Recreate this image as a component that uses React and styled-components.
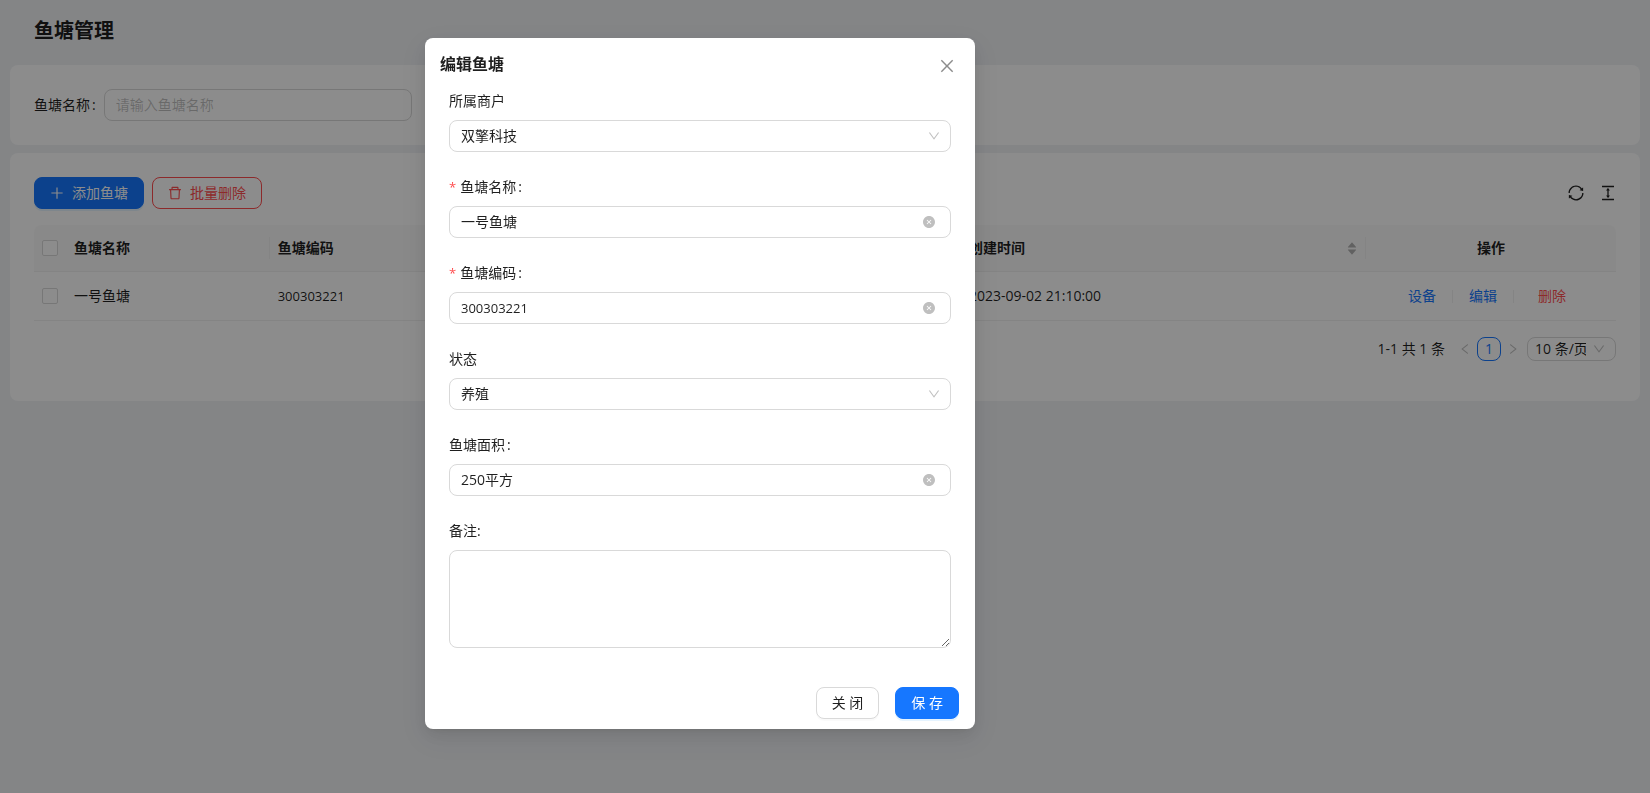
import React, { useState } from 'react';
import styled, { createGlobalStyle } from 'styled-components';
import {
  AiFillCaretDown,
  AiFillCaretUp,
  AiFillCloseCircle,
  AiOutlineClose,
  AiOutlineColumnHeight,
  AiOutlineDelete,
  AiOutlineDown,
  AiOutlineLeft,
  AiOutlinePlus,
  AiOutlineRight,
  AiOutlineSync,
} from 'react-icons/ai';

const GlobalStyle = createGlobalStyle`
  *, *::before, *::after {
    box-sizing: border-box;
  }

  body {
    margin: 0;
    background-color: #f0f2f5;
    color: rgba(0, 0, 0, 0.88);
    font-family: 'Open Sans', 'Noto Sans CJK SC', sans-serif;
    font-size: 14px;
    line-height: 22px;
  }

  button, input, select, textarea {
    font: inherit;
    color: inherit;
  }

  svg {
    display: block;
    flex: none;
  }
`;

const Page = styled.main`
  padding: 0 10px;
`;

const PageTitle = styled.h1`
  margin: 0;
  padding: 17px 24px 20px;
  font-size: 20px;
  font-weight: 600;
  line-height: 28px;
`;

const Card = styled.section`
  margin-bottom: 8px;
  padding: 24px;
  background-color: #fff;
  border-radius: 8px;
`;

const SearchForm = styled.form`
  display: grid;
  grid-template-columns: repeat(4, 1fr);
  gap: 24px;
`;

const SearchItem = styled.div`
  display: flex;
  align-items: center;
  gap: 8px;
`;

const Label = styled.label`
  display: flex;
  align-items: center;
  flex: none;

  &::before {
    content: '*';
    display: ${({ $required }) => ($required ? 'block' : 'none')};
    margin-right: 4px;
    color: #ff4d4f;
    font-size: 13px;
  }

  &::after {
    content: ':';
    display: ${({ $colon }) => ($colon ? 'block' : 'none')};
    margin-left: 2px;
  }
`;

const InputBox = styled.div`
  display: flex;
  align-items: center;
  flex: 1;
  min-width: 0;
  height: 32px;
  padding: 0 11px;
  background-color: #fff;
  border: 1px solid #d9d9d9;
  border-radius: 8px;
`;

const TextInput = styled.input`
  flex: 1;
  min-width: 0;
  padding: 0;
  border: 0;
  outline: 0;
  background: none;

  &::placeholder {
    color: rgba(0, 0, 0, 0.25);
  }
`;

const NumberInput = styled(TextInput)`
  font-size: 13px;
`;

const ClearButton = styled.button`
  margin: 0 4px;
  padding: 0;
  border: 0;
  background: none;
  color: rgba(0, 0, 0, 0.25);
  font-size: 12px;
  cursor: pointer;
`;

const SelectBox = styled.div`
  display: grid;
  align-items: center;

  select, svg {
    grid-area: 1 / 1;
  }

  svg {
    justify-self: end;
    margin-right: 11px;
    color: rgba(0, 0, 0, 0.25);
    font-size: 12px;
    pointer-events: none;
  }
`;

const Select = styled.select`
  width: 100%;
  height: ${({ $small }) => ($small ? '24px' : '32px')};
  padding: ${({ $small }) => ($small ? '0 29px 0 7px' : '0 29px 0 11px')};
  appearance: none;
  background-color: #fff;
  border: 1px solid #d9d9d9;
  border-radius: 8px;
  line-height: 22px;
`;

const Textarea = styled.textarea`
  display: block;
  width: 100%;
  height: 98px;
  padding: 4px 11px;
  border: 1px solid #d9d9d9;
  border-radius: 8px;
  resize: vertical;
`;

const Toolbar = styled.div`
  display: flex;
  align-items: center;
  justify-content: space-between;
  margin-bottom: 16px;
`;

const ButtonGroup = styled.div`
  display: flex;
  gap: 8px;
`;

const Button = styled.button`
  display: flex;
  align-items: center;
  gap: 8px;
  height: 32px;
  padding: 0 15px;
  background-color: #fff;
  border: 1px solid #d9d9d9;
  border-radius: 8px;
  box-shadow: 0 2px 0 rgba(0, 0, 0, 0.02);
  cursor: pointer;
`;

const PrimaryButton = styled(Button)`
  background-color: #1677ff;
  border-color: #1677ff;
  box-shadow: 0 2px 0 rgba(5, 145, 255, 0.1);
  color: #fff;
`;

const DangerButton = styled(Button)`
  border-color: #ff4d4f;
  box-shadow: none;
  color: #ff4d4f;
`;

const ToolIcons = styled.div`
  display: flex;
  gap: 16px;
`;

const IconButton = styled.button`
  padding: 0;
  border: 0;
  background: none;
  font-size: 16px;
  cursor: pointer;
`;

const Table = styled.table`
  width: 100%;
  border-collapse: separate;
  border-spacing: 0;
  table-layout: fixed;
`;

const Col = styled.col`
  width: ${({ $width }) => $width};
`;

const Th = styled.th`
  position: relative;
  height: 47px;
  padding: 12px 8px;
  background-color: #fafafa;
  border-bottom: 1px solid #f0f0f0;
  font-weight: 600;
  text-align: ${({ $align }) => $align || 'left'};

  &:first-child {
    border-top-left-radius: 8px;
  }

  &:last-child {
    border-top-right-radius: 8px;
  }

  &:not(:first-child):not(:last-child)::after {
    content: '';
    position: absolute;
    top: 12px;
    right: 0;
    width: 1px;
    height: 22px;
    background-color: #f0f0f0;
  }
`;

const Td = styled.td`
  height: 49px;
  padding: 12px 8px;
  border-bottom: 1px solid #f0f0f0;
`;

const NumberTd = styled(Td)`
  font-size: 13px;
`;

const Checkbox = styled.input`
  display: block;
  width: 16px;
  height: 16px;
  margin: 0;
  appearance: none;
  background-color: #fff;
  border: 1px solid #d9d9d9;
  border-radius: 2px;

  &:checked {
    background-color: #1677ff;
    border-color: #1677ff;
  }
`;

const SortHeader = styled.div`
  display: flex;
  align-items: center;
  justify-content: space-between;
`;

const Sorter = styled.button`
  display: grid;
  padding: 0;
  border: 0;
  background: none;
  color: rgba(0, 0, 0, 0.29);
  font-size: 12px;

  svg + svg {
    margin-top: -5px;
  }
`;

const Actions = styled.div`
  display: flex;
  align-items: center;
  justify-content: center;
  gap: 8px;
`;

const ActionLink = styled.a`
  padding: ${({ $danger }) => ($danger ? '0 16px' : '0 8px')};
  color: ${({ $danger }) => ($danger ? '#ff4d4f' : '#1677ff')};
  text-decoration: none;
`;

const Divider = styled.span`
  width: 1px;
  height: 13px;
  background-color: #f0f0f0;
`;

const Pagination = styled.nav`
  display: flex;
  align-items: center;
  justify-content: flex-end;
  margin: 16px 0;
`;

const Total = styled.span`
  margin-right: 8px;
`;

const PageButton = styled.button`
  display: flex;
  align-items: center;
  justify-content: center;
  width: 24px;
  height: 24px;
  padding: 0;
  background: none;
  border: 1px solid ${({ $active }) => ($active ? '#1677ff' : 'transparent')};
  border-radius: 8px;
  color: ${({ $active }) => ($active ? '#1677ff' : 'rgba(0, 0, 0, 0.25)')};

  svg {
    font-size: 12px;
  }
`;

const PageSize = styled.div`
  width: 89px;
  margin-left: 2px;
`;

const Mask = styled.div`
  position: fixed;
  inset: 0;
  padding: 38px 24px 24px calc(50% - 400px);
  background-color: rgba(0, 0, 0, 0.45);
  overflow: auto;
`;

const Modal = styled.div`
  max-width: 550px;
  background-color: #fff;
  border-radius: 8px;
  box-shadow: 0 6px 16px 0 rgba(0, 0, 0, 0.08), 0 3px 6px -4px rgba(0, 0, 0, 0.12),
    0 9px 28px 8px rgba(0, 0, 0, 0.05);
`;

const ModalHeader = styled.header`
  display: flex;
  align-items: flex-end;
  justify-content: space-between;
  padding: 14px 20px 14px 15px;
`;

const ModalTitle = styled.h2`
  margin: 0;
  font-size: 16px;
  font-weight: 600;
  line-height: 24px;
`;

const CloseButton = styled(IconButton)`
  height: 20px;
  color: rgba(0, 0, 0, 0.45);
`;

const ModalForm = styled.form`
  padding: 0 24px;
`;

const FormItem = styled.div`
  display: flex;
  flex-direction: column;
  gap: 8px;
  margin-bottom: 24px;

  ${InputBox} {
    flex: none;
  }
`;

const ModalFooter = styled.footer`
  display: flex;
  justify-content: flex-end;
  gap: 16px;
  padding: 15px 16px 10px;
`;

const columns = ['32px', 'auto', '43.7%', '25.6%', '250px'];

// trims the empty margin around the glyph
const Icon = ({ as: Glyph }) => <Glyph viewBox="64 64 896 896" />;

const ClearableField = ({ id, label, required, numeric, initial }) => {
  const [value, setValue] = useState(initial);
  const Field = numeric ? NumberInput : TextInput;

  return (
    <FormItem>
      <Label htmlFor={id} $required={required} $colon>{label}</Label>
      <InputBox>
        <Field id={id} value={value} onChange={(e) => setValue(e.target.value)} />
        {value && (
          <ClearButton type="button" onClick={() => setValue('')}>
            <Icon as={AiFillCloseCircle} />
          </ClearButton>
        )}
      </InputBox>
    </FormItem>
  );
};

const SelectField = ({ id, label, option }) => (
  <FormItem>
    <Label htmlFor={id}>{label}</Label>
    <SelectBox>
      <Select id={id}>
        <option>{option}</option>
      </Select>
      <Icon as={AiOutlineDown} />
    </SelectBox>
  </FormItem>
);

const EditModal = ({ onClose }) => (
  <Mask>
    <Modal role="dialog" aria-modal="true" aria-labelledby="modal-title">
      <ModalHeader>
        <ModalTitle id="modal-title">编辑鱼塘</ModalTitle>
        <CloseButton type="button" onClick={onClose}>
          <Icon as={AiOutlineClose} />
        </CloseButton>
      </ModalHeader>
      <ModalForm>
        <SelectField id="merchant" label="所属商户" option="双擎科技" />
        <ClearableField id="name" label="鱼塘名称" required initial="一号鱼塘" />
        <ClearableField id="code" label="鱼塘编码" required numeric initial="300303221" />
        <SelectField id="status" label="状态" option="养殖" />
        <ClearableField id="area" label="鱼塘面积" initial="250平方" />
        <FormItem>
          <Label htmlFor="remark">备注:</Label>
          <Textarea id="remark" />
        </FormItem>
      </ModalForm>
      <ModalFooter>
        <Button type="button" onClick={onClose}>关 闭</Button>
        <PrimaryButton type="button">保 存</PrimaryButton>
      </ModalFooter>
    </Modal>
  </Mask>
);

const App = () => {
  const [editing, setEditing] = useState(true);

  return (
    <>
      <GlobalStyle />
      <Page>
        <PageTitle>鱼塘管理</PageTitle>

        <Card>
          <SearchForm>
            <SearchItem>
              <Label htmlFor="search-name" $colon>鱼塘名称</Label>
              <InputBox>
                <TextInput id="search-name" placeholder="请输入鱼塘名称" />
              </InputBox>
            </SearchItem>
          </SearchForm>
        </Card>

        <Card>
          <Toolbar>
            <ButtonGroup>
              <PrimaryButton type="button"><Icon as={AiOutlinePlus} />添加鱼塘</PrimaryButton>
              <DangerButton type="button"><Icon as={AiOutlineDelete} />批量删除</DangerButton>
            </ButtonGroup>
            <ToolIcons>
              <IconButton type="button"><Icon as={AiOutlineSync} /></IconButton>
              <IconButton type="button"><Icon as={AiOutlineColumnHeight} /></IconButton>
            </ToolIcons>
          </Toolbar>

          <Table>
            <colgroup>
              {columns.map((width, i) => <Col key={i} $width={width} />)}
            </colgroup>
            <thead>
              <tr>
                <Th><Checkbox type="checkbox" /></Th>
                <Th>鱼塘名称</Th>
                <Th>鱼塘编码</Th>
                <Th>
                  <SortHeader>
                    创建时间
                    <Sorter type="button"><AiFillCaretUp /><AiFillCaretDown /></Sorter>
                  </SortHeader>
                </Th>
                <Th $align="center">操作</Th>
              </tr>
            </thead>
            <tbody>
              <tr>
                <Td><Checkbox type="checkbox" /></Td>
                <Td>一号鱼塘</Td>
                <NumberTd>300303221</NumberTd>
                <Td>2023-09-02 21:10:00</Td>
                <Td>
                  <Actions>
                    <ActionLink href="#device">设备</ActionLink>
                    <Divider />
                    <ActionLink href="#edit" onClick={() => setEditing(true)}>编辑</ActionLink>
                    <Divider />
                    <ActionLink href="#delete" $danger>删除</ActionLink>
                  </Actions>
                </Td>
              </tr>
            </tbody>
          </Table>

          <Pagination>
            <Total>1-1 共 1 条</Total>
            <PageButton type="button" disabled><Icon as={AiOutlineLeft} /></PageButton>
            <PageButton type="button" $active>1</PageButton>
            <PageButton type="button" disabled><Icon as={AiOutlineRight} /></PageButton>
            <PageSize>
              <SelectBox>
                <Select $small aria-label="页码">
                  <option>10 条/页</option>
                </Select>
                <Icon as={AiOutlineDown} />
              </SelectBox>
            </PageSize>
          </Pagination>
        </Card>
      </Page>

      {editing && <EditModal onClose={() => setEditing(false)} />}
    </>
  );
};

export default App;
